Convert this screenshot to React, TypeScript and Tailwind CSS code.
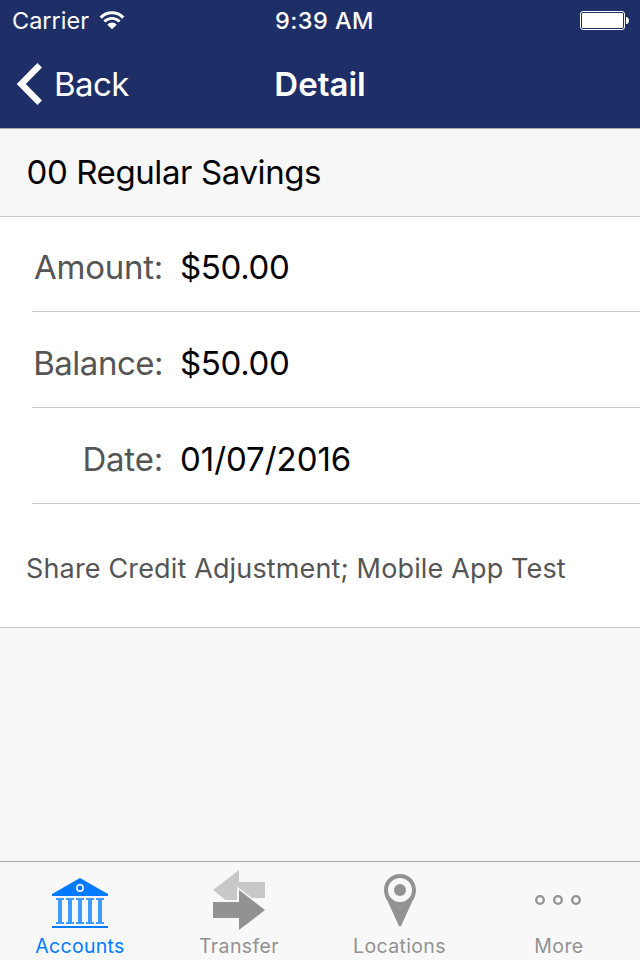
import type { ReactNode } from "react";
import { clsx } from "clsx";

type Field = { label: string; value: string; labelClass: string; valueClass: string };

const fields: Field[] = [
  { label: "Amount:", value: "$50.00", labelClass: "tracking-[-0.25px]", valueClass: "tracking-[-0.35px]" },
  { label: "Balance:", value: "$50.00", labelClass: "tracking-[-0.5px]", valueClass: "tracking-[-0.35px]" },
  { label: "Date:", value: "01/07/2016", labelClass: "tracking-[-0.2px]", valueClass: "tracking-[-0.05px]" },
];

function WifiIcon() {
  return (
    <svg className="w-[26px] h-5" viewBox="0 0 26 20" fill="none" stroke="white">
      <path d="M1.700 7.600A15.600 15.600 0 0 1 24.300 7.600" strokeWidth="3.200" />
      <path d="M5.400 11.500A10.700 10.700 0 0 1 20.600 11.500" strokeWidth="2.900" />
      <path d="M8.300 14.700A6.300 6.300 0 0 1 17.700 14.700L13 19.200Z" fill="white" stroke="none" />
    </svg>
  );
}

function BatteryIcon() {
  return (
    <svg className="w-[50px] h-5" viewBox="0 0 50 20">
      <rect x="0.5" y="1.5" width="44" height="18" rx="2.5" fill="none" stroke="white" />
      <rect x="2" y="3" width="41" height="15" rx="1" fill="white" />
      <path d="M46 7h1q2 1 2 3.500q0 2.500-2 3.500h-1z" fill="white" />
    </svg>
  );
}

function BankIcon() {
  return (
    <svg className="w-14 h-[52px]" viewBox="0 0 56 52" fill="#007aff">
      <path d="M28 0L56 16v2H0v-2Z" />
      <circle cx="28" cy="10" r="3.200" fill="none" stroke="white" strokeWidth="1.500" />
      {[4, 14, 24, 34, 44].map((x) => (
        <path key={x} fill="#409bff" d={`M${x} 20h8v2h-2v22h2v2h-8v-2h2V22h-2z`} />
      ))}
      <path d="M0 48h56v2H0z" />
    </svg>
  );
}

function TransferIcon() {
  return (
    <svg className="w-[52px] h-[60px]" viewBox="0 0 52 60">
      <path d="M0 20L26 0v12h26v16H39L24 16.500V30H12.500Z" fill="#c8c8c8" />
      <path d="M0 32h26V20l26 20-26 20V48H0z" fill="#929292" />
    </svg>
  );
}

function PinIcon() {
  return (
    <svg className="w-8 h-[52px]" viewBox="0 0 32 52" fill="#929292">
      <path
        fillRule="evenodd"
        d="M16 0C25 0 32 7 32 16C32 20 31 23 28.500 27L17 52H15L3.500 27C1 23 0 20 0 16C0 7 7 0 16 0ZM16 4A12 12 0 1 0 16 28A12 12 0 1 0 16 4Z"
      />
      <circle cx="16" cy="16" r="6" />
    </svg>
  );
}

function MoreIcon() {
  return (
    <svg className="w-[46px] h-[10px]" viewBox="0 0 46 10" fill="none" stroke="#929292" strokeWidth="2.300">
      <circle cx="5" cy="5" r="3.800" />
      <circle cx="23" cy="5" r="3.800" />
      <circle cx="41" cy="5" r="3.800" />
    </svg>
  );
}

function Tab({ icon, label, active, className }: { icon: ReactNode; label: string; active?: boolean; className: string }) {
  return (
    <button className="flex flex-col items-center w-40 pt-2">
      <span className="flex items-start justify-center h-[62px]">{icon}</span>
      <span
        className={clsx(
          "h-7 leading-7 text-[19.5px] whitespace-nowrap",
          active ? "text-[#007aff]" : "text-[#929292]",
          className
        )}
      >
        {label}
      </span>
    </button>
  );
}

export default function App() {
  return (
    <div className="flex flex-col w-[640px] h-[960px] overflow-hidden bg-[#f7f7f7] font-['Inter',sans-serif] text-black">
      {/* Status bar + navigation */}
      <header className="h-[129px] shrink-0 bg-[#1e2e67] border-b border-[#a9a8a5] text-white">
        <div className="grid grid-cols-[1fr_auto_1fr] items-center h-10 pl-3 pr-[10px] text-[23.5px]">
          <div className="flex items-center gap-[10px]">
            <span className="pt-px">Carrier</span>
            <WifiIcon />
          </div>
          <span className="pt-px pl-[7px] font-medium tracking-[0.45px]">9:39 AM</span>
          <div className="flex justify-end">
            <BatteryIcon />
          </div>
        </div>
        <div className="grid grid-cols-[1fr_auto_1fr] items-center h-[88px] pl-4 pr-4 text-[33px]">
          <button className="flex items-center gap-3">
            <svg className="w-[26px] h-[42px]" viewBox="0 0 26 42" fill="none">
              <path d="M23.700 2.300L5.300 21L23.700 39.700" stroke="white" strokeWidth="6.500" />
            </svg>
            <span className="pt-[2px] tracking-[-0.6px]">Back</span>
          </button>
          <h1 className="pt-[2px] font-semibold">Detail</h1>
        </div>
      </header>

      <h2 className="flex items-center h-[88px] shrink-0 pl-[26.5px] text-[33px] tracking-[-0.4px] border-b border-[#c8c7cc]">
        00 Regular Savings
      </h2>

      <main className="bg-white border-b border-[#c8c7cc]">
        {fields.map((f, i) => (
          <div
            key={f.label}
            className={clsx(
              "flex items-center ml-8 border-b border-[#c8c7cc] text-[33px] pt-2",
              i === 0 ? "h-[95px]" : "h-24"
            )}
          >
            <span className={clsx("w-[131px] text-right text-[#555]", f.labelClass)}>{f.label}</span>
            <span className={clsx("ml-[17px]", f.valueClass)}>{f.value}</span>
          </div>
        ))}
        <p className="flex items-center h-[123px] pt-2 pl-[26px] text-[27px] tracking-[0.15px] text-[#555]">
          Share Credit Adjustment; Mobile App Test
        </p>
      </main>

      <nav className="flex h-[99px] mt-auto shrink-0 border-t border-[#aaa] bg-[#f8f8f8]">
        <Tab icon={<span className="pt-2"><BankIcon /></span>} label="Accounts" active className="tracking-[0.3px]" />
        <Tab icon={<span className="pr-[2px]"><TransferIcon /></span>} label="Transfer" className="pr-[2px] tracking-[0.4px]" />
        <Tab icon={<span className="pt-1"><PinIcon /></span>} label="Locations" className="pr-px tracking-[0.35px]" />
        <Tab icon={<span className="pt-[25px] pr-1"><MoreIcon /></span>} label="More" className="pr-[2px] tracking-[0.4px]" />
      </nav>
    </div>
  );
}
